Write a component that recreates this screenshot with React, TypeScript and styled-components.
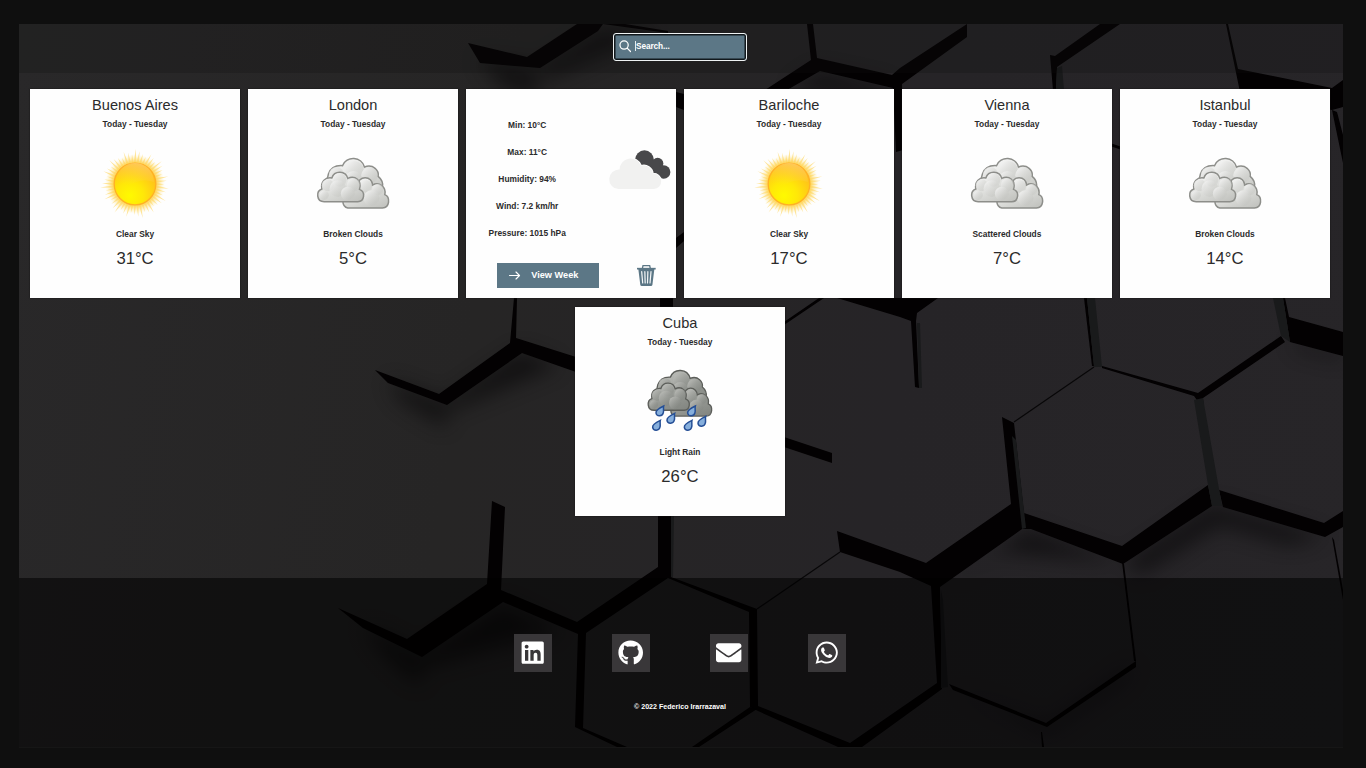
import React from 'react';
import styled, { createGlobalStyle } from 'styled-components';
import { FaLinkedin, FaGithub, FaEnvelope, FaWhatsapp } from 'react-icons/fa';

const GlobalStyle = createGlobalStyle`
  * { box-sizing: border-box; }
  body { margin: 0; background: #0f0f0f; font-family: "Liberation Sans", Arial, sans-serif; }
`;

const Page = styled.div`
  height: 768px;
  padding: 24px 23px 20px 19px;
  overflow: hidden;
`;

const Frame = styled.div`
  position: relative;
  height: 723px;
  display: flex;
  flex-direction: column;
  background: linear-gradient(100deg, #292829 0%, #262525 35%, #262427 65%, #272528 100%);
  box-shadow: 0 1px 0 #161616;
`;

const Backdrop = styled.svg`
  position: absolute;
  inset: 0;
  width: 100%;
  height: 100%;
`;

const Header = styled.header`
  position: relative;
  height: 49px;
  padding: 9px 3px 0 0;
  display: flex;
  justify-content: center;
  align-items: flex-start;
  background: rgba(14, 14, 14, 0.25);
`;

const SearchBox = styled.label`
  width: 134px;
  height: 27.5px;
  display: flex;
  align-items: center;
  padding: 0 0 1px 5px;
  border: 1.5px solid #eef2f3;
  border-radius: 3px;
  background: #5c7786;
  box-shadow: inset 0 0 0 1.5px #11181c;
  color: #fff;
`;

const SearchGlyph = styled.svg`
  width: 12.5px;
  height: 12.5px;
  margin-right: 4px;
`;

const Placeholder = styled.span`
  height: 10px;
  border-left: 1px solid #e5ecef;
  font-size: 8.3px;
  font-weight: 700;
  line-height: 10px;
  letter-spacing: -0.1px;
`;

const Main = styled.main`
  position: relative;
  height: 505px;
  padding: 15.7px 2px 0 0;
  display: flex;
  flex-wrap: wrap;
  justify-content: center;
  align-content: flex-start;
  gap: 9px 8.4px;
`;

const Card = styled.article`
  width: 209.6px;
  height: 209px;
  background: #fefefe;
  color: #2b2b2b;
  box-shadow: 0 0 1.5px #111;
`;

const CityCard = styled(Card)`
  display: flex;
  flex-direction: column;
  align-items: center;
  padding-top: 6px;
`;

const City = styled.h2`
  margin: 0;
  font-size: 14.6px;
  font-weight: 400;
  line-height: 20px;
`;

const Label = styled.span<{ $height?: number }>`
  font-size: 8.4px;
  font-weight: 700;
  line-height: ${(p) => p.$height ?? 12}px;
  white-space: nowrap;
`;

const Day = styled(Label)`
  margin: 3.3px 0 10px;
`;

const WeatherArt = styled.svg`
  width: 88px;
  height: 88px;
  flex: none;
`;

const Temp = styled.span`
  margin-top: 8.7px;
  font-size: 16.7px;
  line-height: 20px;
`;

const DetailTop = styled.div`
  display: flex;
  height: 174px;
`;

const Stats = styled.div`
  width: 122px;
  padding-top: 23px;
  display: flex;
  flex-direction: column;
  align-items: center;
`;

const SmallCloud = styled.svg`
  width: 67.5px;
  height: 43.8px;
  margin: 58px 0 0 18px;
`;

const DetailActions = styled.div`
  display: flex;
  padding-left: 30.5px;
`;

const WeekButton = styled.button`
  width: 102.5px;
  height: 25.5px;
  padding: 0 0 1px 12.5px;
  border: 0;
  display: flex;
  align-items: center;
  background: #5c7786;
  color: #fff;
  font: 700 9.2px "Liberation Sans", Arial, sans-serif;
`;

const Arrow = styled.svg`
  width: 11.5px;
  height: 9px;
  margin: 2px 10.5px 0 0;
`;

const Trash = styled.svg`
  width: 20.7px;
  height: 22.7px;
  margin: 1.3px 0 0 37px;
`;

const Footer = styled.footer`
  position: relative;
  height: 169px;
  padding: 56px 2px 0 0;
  display: flex;
  flex-direction: column;
  align-items: center;
  background: rgba(0, 0, 0, 0.54);
`;

const Socials = styled.nav`
  display: flex;
  gap: 60px;
`;

const SocialLink = styled.a`
  width: 38px;
  height: 38px;
  display: flex;
  align-items: center;
  justify-content: center;
  background: #393739;
  color: #fff;
  font-size: 25.4px;
`;

const Copyright = styled.small`
  margin-top: 29px;
  color: #fff;
  font-size: 7.1px;
  font-weight: 700;
  line-height: 12px;
`;

const gaps = [
  '468,43 527,57 577,24 603,24 598,31 540,68 480,63',
  '603,24 625,24 668,31 668,33',
  '807,24 813,24 817,58 892,75 900,68 967,24 967,37 902,84 903,150 896,152 893,88 820,71 787,90 765,90 811,60',
  '1050,55 1055,56 1100,24 1120,24 1057,67 1056,90 1053,90',
  '1226,24 1228,24 1238,69 1332,88 1343,80 1343,107 1332,110 1240,92',
  '1332,110 1337,112 1343,135 1343,163',
  '676,92 684,94 684,110 676,107',
  '676,238 684,232 684,241 676,248',
  '1110,143 1122,147 1122,150 1110,146',
  '375,370 439,394 510,343 514,298 517,298 516,338 576,357 576,372 522,353 460,396 447,405 388,383',
  '660,298 673,298 673,308 660,308',
  '819,298 824,298 784,325 784,322',
  '837,298 938,298 917,313 916,321 919,388 915,387 911,321 900,317',
  '784,437 832,453 832,463 784,447',
  '492,501 505,507 501,590 577,622 658,567 658,516 671,516 671,577 757,609 758,706 850,743 937,683 931,586 900,572 840,552 837,531 926,563 1011,504 1002,417 1014,423 1024,513 1122,546 1208,485 1212,506 1123,564 1031,529 1022,529 940,587 942,689 862,747 838,747 758,711 750,707 749,612 668,578 586,633 583,728 627,747 617,747 575,727 578,634 503,602 422,657 363,628 338,608 407,639 487,584',
  '750,707 757,709 699,747 692,747',
  '1102,366 1198,393 1281,336 1285,342 1203,398 1204,410 1194,396 1102,368',
  '1283,298 1285,298 1289,317 1343,332 1343,356 1290,342',
  '1219,490 1324,523 1343,511 1343,527 1325,537 1223,507',
  '949,684 1046,723 1136,661 1136,667 1047,727 953,690',
  '1122,562 1124,564 1136,661 1134,661',
  '1041,732 1042,732 1044,747 1042,747',
  '1332,537 1334,540 1343,590 1343,600',
  '1084,298 1087,298 1094,366 1092,366',
];

const sideFaces = [
  '1057,68 1062,66 1064,90 1056,90',
  '1087,298 1095,298 1102,367 1094,367',
  '1273,298 1283,298 1290,342 1281,336',
  '1194,400 1203,398 1222,506 1212,506 1208,485',
  '1012,436 1016,440 1026,528 1022,529',
  '941,590 943,600 948,687 941,688',
  '917,323 920,323 922,388 919,388',
  '671,516 674,516 673,577 671,577',
];

const shadows = [
  '478,58 537,66 537,100 500,85',
  '388,380 446,402 446,428 400,400',
  '363,625 422,655 420,685 385,655',
  '447,400 520,350 560,365 447,412',
  '422,652 502,602 560,630 422,667',
  '1125,562 1212,504 1325,536 1290,545 1220,525 1140,575',
  '1028,529 1120,562 1000,552 945,586',
  '951,688 1047,726 1135,664 1125,680 1047,733',
  '1290,340 1343,354 1343,360 1300,350',
  '540,66 600,28 668,31 640,40 545,80',
  '818,70 890,86 890,98 790,90',
];

function HexBackdrop() {
  return (
    <Backdrop viewBox="19 24 1324 723" preserveAspectRatio="none" aria-hidden="true">
      <defs>
        <filter id="soft" x="-20%" y="-20%" width="140%" height="140%" colorInterpolationFilters="sRGB">
          <feGaussianBlur stdDeviation="10" />
        </filter>
        <filter id="edge" colorInterpolationFilters="sRGB"><feGaussianBlur stdDeviation="0.4" /></filter>
      </defs>
      <g fill="#080708" opacity="0.65" filter="url(#soft)">
        {shadows.map((p) => <polygon key={p} points={p} />)}
      </g>
      <g filter="url(#edge)">
        <g fill="#030102">{gaps.map((p) => <polygon key={p} points={p} />)}</g>
        <g fill="#191a1b">{sideFaces.map((p) => <polygon key={p} points={p} />)}</g>
        <path d="M1014 422L1094 367M757 609L840 552" stroke="#080708" strokeWidth="1.2" />
      </g>
    </Backdrop>
  );
}

const rays = Array.from({ length: 52 }, (_, i) => {
  const a = (i / 52) * Math.PI * 2;
  const r = 29 + ((i * 5) % 7);
  const pt = (radius: number, angle: number) =>
    `${(44 + Math.cos(angle) * radius).toFixed(1)},${(44 + Math.sin(angle) * radius).toFixed(1)}`;
  return `${pt(20, a - 0.07)} ${pt(r, a + 0.02)} ${pt(20, a + 0.07)}`;
});

function Sun() {
  return (
    <WeatherArt viewBox="0 0 88 88">
      <defs>
        <radialGradient id="halo">
          <stop offset="0.6" stopColor="#ffc935" />
          <stop offset="0.76" stopColor="#ffd75c" stopOpacity="0.75" />
          <stop offset="1" stopColor="#fff0b8" stopOpacity="0" />
        </radialGradient>
        <radialGradient id="disc" cx="0.38" cy="0.78" r="0.8">
          <stop offset="0" stopColor="#fffa00" />
          <stop offset="0.4" stopColor="#ffe808" />
          <stop offset="1" stopColor="#ffb71f" />
        </radialGradient>
        <linearGradient id="gloss" x1="0.7" y1="0" x2="0.3" y2="1">
          <stop offset="0" stopColor="#ffdc9a" stopOpacity="0.5" />
          <stop offset="1" stopColor="#ffd34a" stopOpacity="0" />
        </linearGradient>
      </defs>
      <g fill="#ffda70" opacity="0.75">{rays.map((p) => <polygon key={p} points={p} />)}</g>
      <circle cx="44" cy="44" r="30" fill="url(#halo)" />
      <circle cx="44" cy="44" r="20.8" fill="url(#disc)" stroke="#ffb024" strokeWidth="1.3" />
      <path d="M25 42A19 19 0 0 1 63 42Q52 38 43 43T25 42" fill="url(#gloss)" />
    </WeatherArt>
  );
}

const backCloud = 'M74 125C60 108 64 57 112 60A35 35 0 0 1 178 64C205 54 222 76 219 92Q235 105 232 124L225 155H74Z';
const rightCloud = 'M128 187Q114 184 113 167L158 118A22 22 0 0 1 202 118C222 107 244 124 239 147C256 154 254 187 232 187Z';
const frontCloud = 'M57 168C33 168 32 136 50 130C46 109 59 94 80 97A25 25 0 0 1 128 98C150 88 171 105 163 131C182 138 178 168 158 168Z';

function CloudShapes({ id, dark = false }: { id: string; dark?: boolean }) {
  const light = dark ? '#c5c6c2' : '#fbfbfb';
  const mid = dark ? '#969994' : '#dddedb';
  const deep = dark ? '#848782' : '#c3c4c0';
  return (
    <>
      <defs>
        <linearGradient id={`${id}-body`} x1="0.1" y1="0" x2="0.8" y2="1">
          <stop offset="0" stopColor={light} />
          <stop offset="0.55" stopColor={mid} />
          <stop offset="1" stopColor={deep} />
        </linearGradient>
        <linearGradient id={`${id}-puff`} x1="0" y1="0" x2="1" y2="1">
          <stop offset="0" stopColor={light} />
          <stop offset="0.75" stopColor={deep} stopOpacity="0.4" />
          <stop offset="1" stopColor={deep} stopOpacity="0" />
        </linearGradient>
      </defs>
      <g fill={`url(#${id}-body)`} stroke={dark ? '#5c5e5a' : '#8d8e8a'} strokeWidth="4.5">
        <path d={backCloud} />
        <g stroke="none" fill={`url(#${id}-puff)`}>
          <circle cx="94" cy="86" r="22" /><circle cx="148" cy="74" r="28" />
          <circle cx="193" cy="90" r="25" /><circle cx="145" cy="103" r="27" />
        </g>
        <path d={rightCloud} />
        <g stroke="none" fill={`url(#${id}-puff)`}>
          <circle cx="182" cy="122" r="19" /><circle cx="218" cy="132" r="17" /><circle cx="199" cy="158" r="24" />
        </g>
        <path d={frontCloud} />
        <g stroke="none" fill={`url(#${id}-puff)`}>
          <circle cx="68" cy="119" r="18" /><circle cx="104" cy="103" r="20" />
          <circle cx="145" cy="118" r="20" /><circle cx="57" cy="149" r="14" />
          <circle cx="98" cy="129" r="25" /><circle cx="128" cy="144" r="21" />
        </g>
      </g>
    </>
  );
}

function Clouds({ id }: { id: string }) {
  return <WeatherArt viewBox="11.5 -17 264 264"><CloudShapes id={id} /></WeatherArt>;
}

const drops = [[75, 150], [108, 172], [170, 150], [65, 193], [160, 193], [201, 181]];

function Rain() {
  return (
    <WeatherArt viewBox="3 -9 264 264">
      <g transform="translate(6 -6.8) scale(.895 .92)"><CloudShapes id="rain" dark /></g>
      {drops.map(([x, y]) => (
        <path key={`${x}-${y}`} transform={`translate(${x} ${y})`} d="M11-15C-2-9-13-2-12 6C-10 18 8 17 10 5C12-2 9-8 11-15Z" fill="#86afdc" stroke="#254f96" strokeWidth="4.5" />
      ))}
    </WeatherArt>
  );
}

interface CityProps { name: string; sky: string; temp: number; art: React.ReactNode }

function Weather({ name, sky, temp, art }: CityProps) {
  return (
    <CityCard>
      <City>{name}</City>
      <Day>Today - Tuesday</Day>
      {art}
      <Label>{sky}</Label>
      <Temp>{temp}°C</Temp>
    </CityCard>
  );
}

const stats = ['Min: 10°C', 'Max: 11°C', 'Humidity: 94%', 'Wind: 7.2 km/hr', 'Pressure: 1015 hPa'];

function WeatherDetail() {
  return (
    <Card>
      <DetailTop>
        <Stats>{stats.map((s) => <Label key={s} $height={27}>{s}</Label>)}</Stats>
        <SmallCloud viewBox="20 20 200 130">
          <g fill="#48484a">
            <circle cx="134" cy="58" r="28" /><circle cx="173" cy="69" r="17" />
            <circle cx="191" cy="94" r="20" /><path d="M134 60L175 60L190 110H150Z" />
          </g>
          <path d="M57 145A29 29 0 0 1 60 87A33 33 0 0 1 124 76A27 27 0 0 1 159 99A23 23 0 0 1 162 145Z" fill="#f1f1f0" stroke="#fefefe" strokeWidth="5" paintOrder="stroke" />
        </SmallCloud>
      </DetailTop>
      <DetailActions>
        <WeekButton>
          <Arrow viewBox="0 0 23 18" fill="none" stroke="#fff" strokeWidth="2.3" strokeLinecap="round" strokeLinejoin="round">
            <path d="M1 9H21M14 2L21 9L14 16" />
          </Arrow>
          View Week
        </WeekButton>
        <Trash viewBox="108 373 62 68" fill="none" stroke="#5c7786">
          <path d="M127 387L129 378H149L151 387" strokeWidth="4" />
          <path d="M111 387H167" strokeWidth="5" />
          <path d="M115 388H163L157 436Q156 439 153 439H125Q122 439 121 436Z" fill="#5c7786" stroke="none" />
          <path d="M125 396L128 430M134.5 396L135.5 430M143.5 396L142.5 430M153 396L150 430" stroke="#f4f6f7" strokeWidth="3.6" strokeLinecap="round" />
        </Trash>
      </DetailActions>
    </Card>
  );
}

export default function App() {
  return (
    <>
      <GlobalStyle />
      <Page>
        <Frame>
          <HexBackdrop />
          <Header>
            <SearchBox>
              <SearchGlyph viewBox="0 0 13 13" fill="none" stroke="#fff" strokeWidth="1.3" strokeLinecap="round">
                <circle cx="5.3" cy="5.3" r="4.3" /><path d="M8.5 8.5L12 12" />
              </SearchGlyph>
              <Placeholder>Search...</Placeholder>
            </SearchBox>
          </Header>
          <Main>
            <Weather name="Buenos Aires" sky="Clear Sky" temp={31} art={<Sun />} />
            <Weather name="London" sky="Broken Clouds" temp={5} art={<Clouds id="london" />} />
            <WeatherDetail />
            <Weather name="Bariloche" sky="Clear Sky" temp={17} art={<Sun />} />
            <Weather name="Vienna" sky="Scattered Clouds" temp={7} art={<Clouds id="vienna" />} />
            <Weather name="Istanbul" sky="Broken Clouds" temp={14} art={<Clouds id="istanbul" />} />
            <Weather name="Cuba" sky="Light Rain" temp={26} art={<Rain />} />
          </Main>
          <Footer>
            <Socials>
              <SocialLink><FaLinkedin /></SocialLink>
              <SocialLink><FaGithub /></SocialLink>
              <SocialLink><FaEnvelope /></SocialLink>
              <SocialLink><FaWhatsapp /></SocialLink>
            </Socials>
            <Copyright>© 2022 Federico Irarrazaval</Copyright>
          </Footer>
        </Frame>
      </Page>
    </>
  );
}
